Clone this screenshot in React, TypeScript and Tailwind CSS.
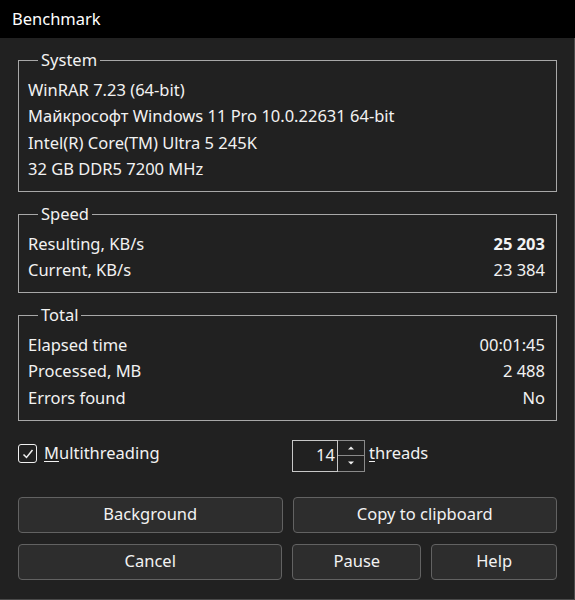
import React from "react";

const font = { fontFamily: '"Noto Sans", "Open Sans", sans-serif' };

function Group({ title, children }: { title: string; children: React.ReactNode }) {
  return (
    <fieldset className="border border-[#a8a8a8] pl-[9px] pr-[11px] pt-[7px] pb-[8px] mx-[18px] mt-[12px]">
      <legend className="ml-[10px] px-[3px] h-[20px] leading-[20px] text-[16.5px]">{title}</legend>
      {children}
    </fieldset>
  );
}

function Row({ label, value, bold }: { label: string; value?: string; bold?: boolean }) {
  return (
    <div className="flex justify-between h-[26.5px] items-center text-[16.5px]">
      <span>{label}</span>
      {value && <span className={bold ? "font-bold" : ""}>{value}</span>}
    </div>
  );
}

function Btn({ label, className }: { label: string; className?: string }) {
  return (
    <button
      className={
        "h-[36px] rounded-[4px] border border-[#626262] bg-[#2d2d2d] text-[16.5px] text-[#f2f2f2] " +
        (className ?? "")
      }
    >
      {label}
    </button>
  );
}

export default function App() {
  return (
    <div
      className="w-[575px] h-[600px] bg-[#212121] text-[#f2f2f2] shadow-[inset_-1px_-1px_0_#4a4a4a] flex flex-col"
      style={font}
    >
      <div className="h-[38px] bg-black flex items-center px-[12px] text-[16.5px] text-white">Benchmark</div>

      <Group title="System">
        <Row label="WinRAR 7.23 (64-bit)" />
        <Row label="Майкрософт Windows 11 Pro 10.0.22631 64-bit" />
        <Row label="Intel(R) Core(TM) Ultra 5 245K" />
        <Row label="32 GB DDR5 7200 MHz" />
      </Group>

      <Group title="Speed">
        <Row label="Resulting, KB/s" value="25 203" bold />
        <Row label="Current, KB/s" value="23 384" />
      </Group>

      <Group title="Total">
        <Row label="Elapsed time" value="00:01:45" />
        <Row label="Processed, MB" value="2 488" />
        <Row label="Errors found" value="No" />
      </Group>

      <div className="flex mx-[18px] mt-[19px] h-[32px] text-[16.5px]">
        <div className="flex items-center w-[274px] h-[28px]">
          <div className="w-[19px] h-[19px] border-[1.5px] border-[#f0f0f0] rounded-[3px] flex items-center justify-center">
            <svg width="12" height="12" viewBox="0 0 12 12" fill="none">
              <path d="M1.5 6.5 L4.5 9.5 L10.5 2" stroke="#f0f0f0" strokeWidth="1.5" />
            </svg>
          </div>
          <span className="ml-[7px]">
            <span className="underline underline-offset-2">M</span>ultithreading
          </span>
        </div>
        <div className="flex h-[32px]">
          <div className="w-[46px] h-[32px] border border-[#c8c8c8] flex items-center justify-end pr-[2px]">14</div>
          <div className="w-[27px] h-[32px] flex flex-col border border-l-0 border-[#8a8a8a]">
            <div className="flex-1 flex items-center justify-center border-b border-[#8a8a8a]">
              <svg width="8" height="5" viewBox="0 0 8 5">
                <path d="M1 4.5 L4 1.5 L7 4.5 Z" fill="#f0f0f0" />
              </svg>
            </div>
            <div className="flex-1 flex items-center justify-center">
              <svg width="8" height="5" viewBox="0 0 8 5">
                <path d="M1 0.5 L4 3.5 L7 0.5 Z" fill="#f0f0f0" />
              </svg>
            </div>
          </div>
          <span className="ml-[4px] h-[28px] flex items-center">
            <span className="underline underline-offset-2">t</span>hreads
          </span>
        </div>
      </div>

      <div className="grid grid-cols-2 gap-x-[10px] mx-[18px] mt-[25px]">
        <Btn label="Background" />
        <Btn label="Copy to clipboard" />
      </div>
      <div className="flex gap-x-[10px] mx-[18px] mt-[11px]">
        <Btn label="Cancel" className="w-[265px]" />
        <Btn label="Pause" className="w-[129px]" />
        <Btn label="Help" className="w-[126px]" />
      </div>
    </div>
  );
}
